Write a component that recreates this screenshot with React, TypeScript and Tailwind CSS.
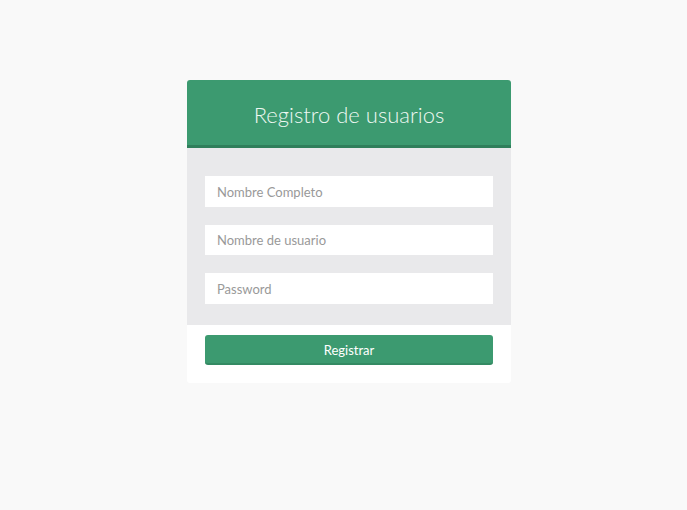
export default function App() {
  return (
    <div className="min-h-[510px] w-full bg-[#f9f9f9] pt-[80px] font-['Lato','Liberation_Sans',sans-serif]">
      <div className="ml-[187px] w-[324px] overflow-hidden rounded-[3px] bg-white">
        <div className="flex h-[68px] items-center justify-center border-b-[3px] border-[#2f7f5b] bg-[#3c9a70] pt-[4px]">
          <h1 className="text-[22px] font-light text-[#eef8f2]">Registro de usuarios</h1>
        </div>
        <form className="flex flex-col">
          <div className="flex flex-col gap-[18px] bg-[#e9e9eb] px-[18px] pt-[28px] pb-[21px]">
            <input
              type="text"
              placeholder="Nombre Completo"
              className="h-[31px] w-full bg-white px-[12px] text-[13px] text-gray-700 outline-none placeholder:text-[#999]"
            />
            <input
              type="text"
              placeholder="Nombre de usuario"
              className="h-[30px] w-full bg-white px-[12px] text-[13px] text-gray-700 outline-none placeholder:text-[#999]"
            />
            <input
              type="password"
              placeholder="Password"
              className="h-[31px] w-full bg-white px-[12px] text-[13px] text-gray-700 outline-none placeholder:text-[#999]"
            />
          </div>
          <div className="px-[18px] pt-[10px] pb-[18px]">
            <button
              type="button"
              className="h-[30px] w-full rounded-[3px] border-b-2 border-[#348a63] bg-[#3c9a70] pt-[3px] text-[13px] text-white"
            >
              Registrar
            </button>
          </div>
        </form>
      </div>
    </div>
  );
}
